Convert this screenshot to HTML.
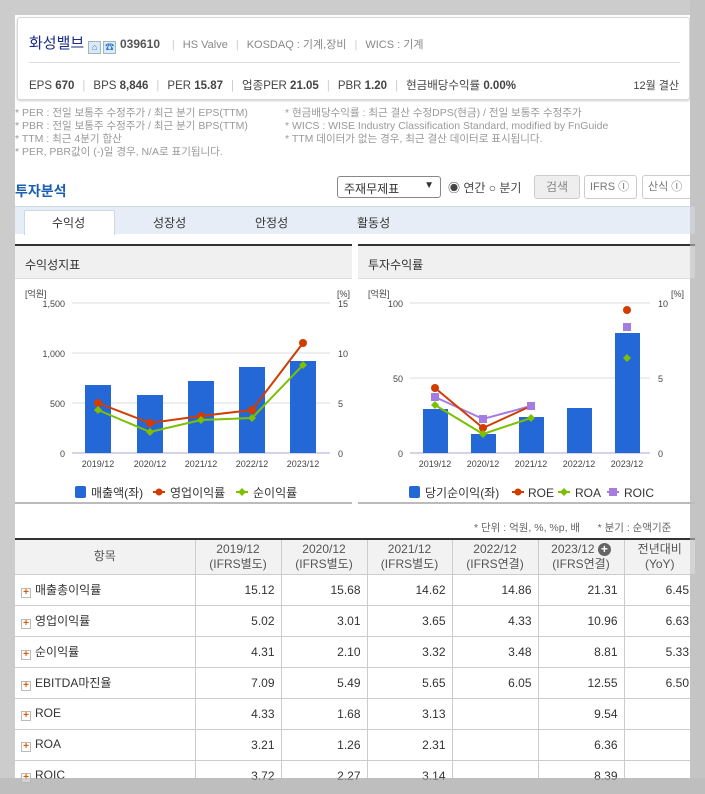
<!DOCTYPE html>
<html><head><meta charset="utf-8"><style>
*{margin:0;padding:0;box-sizing:border-box}
body{width:705px;height:794px;background:#cccccc;font-family:"Liberation Sans","Noto Sans CJK KR",sans-serif;position:relative;overflow:hidden;color:#333}
.a{position:absolute}
#panel{left:15px;top:15px;width:675px;height:763px;background:#fff}
#hdr{left:17px;top:17px;width:673px;height:83px;border:1px solid #d8d8d8;border-radius:3px;background:#fff;box-shadow:0 1px 2px #ccc}
.sep{color:#ccc;margin:0 8px}
.note{font-size:10.5px;color:#999;line-height:13px}
table{border-collapse:collapse;font-size:12px}
td,th{border:1px solid #ccc;height:31px}
th{background:#f2f2f2;font-weight:normal;color:#555;line-height:15px;height:35px}
td{text-align:right;padding-right:6px;color:#333}
td.l{text-align:left;padding-left:6px}
.pl{display:inline-block;width:10px;height:10px;border:1px solid #bbb;background:#fff;color:#e05a00;font-size:10px;line-height:8px;text-align:center;font-weight:bold;margin-right:4px;vertical-align:-1px}
</style></head><body>
<div class="a" id="panel"></div>
<div class="a" id="hdr">
 <div class="a" style="left:11px;top:14px;font-size:14px;white-space:nowrap;color:#555">
  <span style="color:#1a2a8a;font-size:15px">화성밸브</span>
  <span style="display:inline-block;width:13px;height:13px;border:1px solid #9bb;background:#dde8f5;vertical-align:-2px;color:#2a7ad0;font-size:9px;text-align:center;line-height:11px">⌂</span><span style="display:inline-block;width:13px;height:13px;border:1px solid #9bb;background:#dde8f5;vertical-align:-2px;color:#2a7ad0;font-size:9px;text-align:center;line-height:11px;margin-left:2px">☎</span>
  <b style="font-size:12px;color:#555">039610</b>
  <span style="font-size:11px;color:#888"><span class="sep">|</span>HS Valve<span class="sep">|</span>KOSDAQ : 기계,장비<span class="sep">|</span>WICS : 기계</span>
 </div>
 <div class="a" style="left:11px;top:44px;width:651px;border-top:1px solid #ddd"></div>
 <div class="a" style="left:11px;top:59px;font-size:11.5px;color:#444;white-space:nowrap">EPS <b>670</b><span class="sep">|</span>BPS <b>8,846</b><span class="sep">|</span>PER <b>15.87</b><span class="sep">|</span>업종PER <b>21.05</b><span class="sep">|</span>PBR <b>1.20</b><span class="sep">|</span>현금배당수익률 <b>0.00%</b></div>
 <div class="a" style="right:10px;top:59px;font-size:11px;color:#444">12월 결산</div>
</div>
<div class="a note" style="left:15px;top:107px">* PER : 전일 보통주 수정주가 / 최근 분기 EPS(TTM)<br>* PBR : 전일 보통주 수정주가 / 최근 분기 BPS(TTM)<br>* TTM : 최근 4분기 합산<br>* PER, PBR값이 (-)일 경우, N/A로 표기됩니다.</div>
<div class="a note" style="left:285px;top:107px">* 현금배당수익률 : 최근 결산 수정DPS(현금) / 전일 보통주 수정주가<br>* WICS : WISE Industry Classification Standard, modified by FnGuide<br>* TTM 데이터가 없는 경우, 최근 결산 데이터로 표시됩니다.</div>
<div class="a" style="left:15px;top:181px;font-size:14px;font-weight:bold;color:#1a5fb4">투자분석</div>
<div class="a" style="left:337px;top:176px;width:104px;height:22px;border:1px solid #888;border-radius:3px;font-size:12px;padding:3px 6px;background:#fff">주재무제표<span style="float:right;font-size:10px">▼</span></div>
<div class="a" style="left:448px;top:179px;font-size:12px;color:#444">◉ 연간 ○ 분기</div>
<div class="a" style="left:534px;top:175px;width:46px;height:24px;background:#eee;border:1px solid #ccc;border-radius:3px;font-size:12px;color:#888;text-align:center;line-height:22px">검색</div>
<div class="a" style="left:584px;top:175px;width:53px;height:24px;border:1px solid #ccc;border-radius:3px;font-size:11px;color:#777;line-height:22px;padding-left:5px">IFRS Ⓘ</div>
<div class="a" style="left:642px;top:175px;width:52px;height:24px;border:1px solid #ccc;border-radius:3px;font-size:11px;color:#777;line-height:22px;padding-left:5px">산식 Ⓘ</div>
<div class="a" style="left:15px;top:206px;width:680px;height:28px;background:#e6edf6;border-top:1px solid #cdd8e6"></div>
<div class="a" style="left:24px;top:210px;width:91px;height:25px;background:#fff;border:1px solid #cdd8e6;border-bottom:none"></div>
<div class="a" style="top:214px;font-size:12px;color:#333;left:52px">수익성</div>
<div class="a" style="top:214px;font-size:12px;color:#333;left:153px">성장성</div>
<div class="a" style="top:214px;font-size:12px;color:#333;left:255px">안정성</div>
<div class="a" style="top:214px;font-size:12px;color:#333;left:357px">활동성</div>

<div class="a" style="left:15px;top:244px;width:337px;height:35px;background:#f0f0f0;border-top:2px solid #333;border-bottom:1px solid #ddd;font-size:12px;padding:10px 10px">수익성지표</div>
<div class="a" style="left:358px;top:244px;width:337px;height:35px;background:#f0f0f0;border-top:2px solid #333;border-bottom:1px solid #ddd;font-size:12px;padding:10px 10px">투자수익률</div>
<div class="a" style="left:15px;top:502px;width:337px;border-top:2px solid #bbb"></div>
<div class="a" style="left:358px;top:502px;width:337px;border-top:2px solid #bbb"></div>

<svg class="a" style="left:0;top:0" width="705" height="520" font-family="Liberation Sans,Noto Sans CJK KR,sans-serif" font-size="9" fill="#444">
<g stroke="#ddd"><line x1="72" x2="330" y1="303" y2="303"/><line x1="72" x2="330" y1="353" y2="353"/><line x1="72" x2="330" y1="403" y2="403"/>
<line x1="410" x2="650" y1="303" y2="303"/><line x1="410" x2="650" y1="378" y2="378"/></g>
<g stroke="#aac"><line x1="72" x2="330" y1="453" y2="453"/><line x1="410" x2="650" y1="453" y2="453"/></g>
<text x="25" y="297">[억원]</text><text x="337" y="297">[%]</text>
<g text-anchor="end"><text x="65" y="307">1,500</text><text x="65" y="357">1,000</text><text x="65" y="407">500</text><text x="65" y="457">0</text></g>
<text x="338" y="307">15</text><text x="338" y="357">10</text><text x="338" y="407">5</text><text x="338" y="457">0</text>
<g fill="#2468d8"><rect x="85" y="385" width="26" height="68"/><rect x="137" y="395" width="26" height="58"/><rect x="188" y="381" width="26" height="72"/><rect x="239" y="367" width="26" height="86"/><rect x="290" y="361" width="26" height="92"/></g>
<polyline fill="none" stroke="#d23c00" stroke-width="2" points="98,403 150,423 201,416 252,410 303,343"/>
<g fill="#d23c00"><circle cx="98" cy="403" r="4"/><circle cx="150" cy="423" r="4"/><circle cx="201" cy="416" r="4"/><circle cx="252" cy="410" r="4"/><circle cx="303" cy="343" r="4"/></g>
<polyline fill="none" stroke="#7cc000" stroke-width="2" points="98,410 150,432 201,420 252,418 303,365"/>
<g fill="#7cc000"><path d="M98 406l4 4-4 4-4-4z"/><path d="M150 428l4 4-4 4-4-4z"/><path d="M201 416l4 4-4 4-4-4z"/><path d="M252 414l4 4-4 4-4-4z"/><path d="M303 361l4 4-4 4-4-4z"/></g>
<g text-anchor="middle"><text x="98" y="467">2019/12</text><text x="150" y="467">2020/12</text><text x="201" y="467">2021/12</text><text x="252" y="467">2022/12</text><text x="303" y="467">2023/12</text></g>
<g font-size="12" fill="#333"><rect x="75" y="486" width="11" height="12" rx="2" fill="#2468d8"/><text x="91" y="497">매출액(좌)</text>
<line x1="153" x2="165" y1="492" y2="492" stroke="#d23c00" stroke-width="2"/><circle cx="159" cy="492" r="3.5" fill="#d23c00"/><text x="170" y="497">영업이익률</text>
<line x1="236" x2="248" y1="492" y2="492" stroke="#7cc000" stroke-width="2"/><path d="M242 488l4 4-4 4-4-4z" fill="#7cc000"/><text x="253" y="497">순이익률</text></g>

<text x="368" y="297">[억원]</text><text x="671" y="297">[%]</text>
<g text-anchor="end"><text x="403" y="307">100</text><text x="403" y="382">50</text><text x="403" y="457">0</text></g>
<text x="658" y="307">10</text><text x="658" y="382">5</text><text x="658" y="457">0</text>
<g fill="#2468d8"><rect x="423" y="409" width="25" height="44"/><rect x="471" y="434" width="25" height="19"/><rect x="519" y="417" width="25" height="36"/><rect x="567" y="408" width="25" height="45"/><rect x="615" y="333" width="25" height="120"/></g>
<polyline fill="none" stroke="#a57de0" stroke-width="2" points="435,397 483,419 531,406"/>
<polyline fill="none" stroke="#d23c00" stroke-width="2" points="435,388 483,428 531,406"/>
<polyline fill="none" stroke="#7cc000" stroke-width="2" points="435,405 483,434 531,418"/>
<g fill="#a57de0"><rect x="431" y="393" width="8" height="8"/><rect x="479" y="415" width="8" height="8"/><rect x="527" y="402" width="8" height="8"/><rect x="623" y="323" width="8" height="8"/></g>
<g fill="#d23c00"><circle cx="435" cy="388" r="4"/><circle cx="483" cy="428" r="4"/><circle cx="627" cy="310" r="4"/></g>
<g fill="#7cc000"><path d="M435 401l4 4-4 4-4-4z"/><path d="M483 430l4 4-4 4-4-4z"/><path d="M531 414l4 4-4 4-4-4z"/><path d="M627 354l4 4-4 4-4-4z"/></g>
<g text-anchor="middle"><text x="435" y="467">2019/12</text><text x="483" y="467">2020/12</text><text x="531" y="467">2021/12</text><text x="579" y="467">2022/12</text><text x="627" y="467">2023/12</text></g>
<g font-size="12" fill="#333"><rect x="409" y="486" width="11" height="12" rx="2" fill="#2468d8"/><text x="425" y="497">당기순이익(좌)</text>
<line x1="512" x2="524" y1="492" y2="492" stroke="#d23c00" stroke-width="2"/><circle cx="518" cy="492" r="3.5" fill="#d23c00"/><text x="528" y="497">ROE</text>
<line x1="558" x2="570" y1="492" y2="492" stroke="#7cc000" stroke-width="2"/><path d="M564 488l4 4-4 4-4-4z" fill="#7cc000"/><text x="575" y="497">ROA</text>
<line x1="607" x2="619" y1="492" y2="492" stroke="#a57de0" stroke-width="2"/><rect x="609" y="488" width="8" height="8" fill="#a57de0"/><text x="624" y="497">ROIC</text></g>
</svg>

<div class="a" style="left:474px;top:520px;font-size:10.5px;color:#666">* 단위 : 억원, %, %p, 배 &nbsp;&nbsp;&nbsp;&nbsp;&nbsp;* 분기 : 순액기준</div>
<table class="a" style="left:15px;top:538px;width:680px;border-top:2px solid #333">
<colgroup><col style="width:180px"><col style="width:86px"><col style="width:86px"><col style="width:85px"><col style="width:86px"><col style="width:86px"><col style="width:71px"></colgroup>
<tr><th style="border-left:none">항목</th><th>2019/12<br>(IFRS별도)</th><th>2020/12<br>(IFRS별도)</th><th>2021/12<br>(IFRS별도)</th><th>2022/12<br>(IFRS연결)</th><th>2023/12 <span style="display:inline-block;width:13px;height:13px;border-radius:50%;background:#666;color:#fff;font-size:12px;line-height:12px;font-weight:bold">+</span><br>(IFRS연결)</th><th style="border-right:none">전년대비<br>(YoY)</th></tr>
<tr><td class="l" style="border-left:none"><span class="pl">+</span>매출총이익률</td><td>15.12</td><td>15.68</td><td>14.62</td><td>14.86</td><td>21.31</td><td style="border-right:none">6.45</td></tr>
<tr><td class="l" style="border-left:none"><span class="pl">+</span>영업이익률</td><td>5.02</td><td>3.01</td><td>3.65</td><td>4.33</td><td>10.96</td><td style="border-right:none">6.63</td></tr>
<tr><td class="l" style="border-left:none"><span class="pl">+</span>순이익률</td><td>4.31</td><td>2.10</td><td>3.32</td><td>3.48</td><td>8.81</td><td style="border-right:none">5.33</td></tr>
<tr><td class="l" style="border-left:none"><span class="pl">+</span>EBITDA마진율</td><td>7.09</td><td>5.49</td><td>5.65</td><td>6.05</td><td>12.55</td><td style="border-right:none">6.50</td></tr>
<tr><td class="l" style="border-left:none"><span class="pl">+</span>ROE</td><td>4.33</td><td>1.68</td><td>3.13</td><td></td><td>9.54</td><td style="border-right:none"></td></tr>
<tr><td class="l" style="border-left:none"><span class="pl">+</span>ROA</td><td>3.21</td><td>1.26</td><td>2.31</td><td></td><td>6.36</td><td style="border-right:none"></td></tr>
<tr><td class="l" style="border-left:none"><span class="pl">+</span>ROIC</td><td>3.72</td><td>2.27</td><td>3.14</td><td></td><td>8.39</td><td style="border-right:none"></td></tr>
</table>
<div class="a" style="left:0;top:778px;width:705px;height:16px;background:rgba(180,180,180,0.6)"></div>
<div class="a" style="left:690px;top:0;width:15px;height:794px;background:rgba(190,190,190,0.6)"></div>
</body></html>
